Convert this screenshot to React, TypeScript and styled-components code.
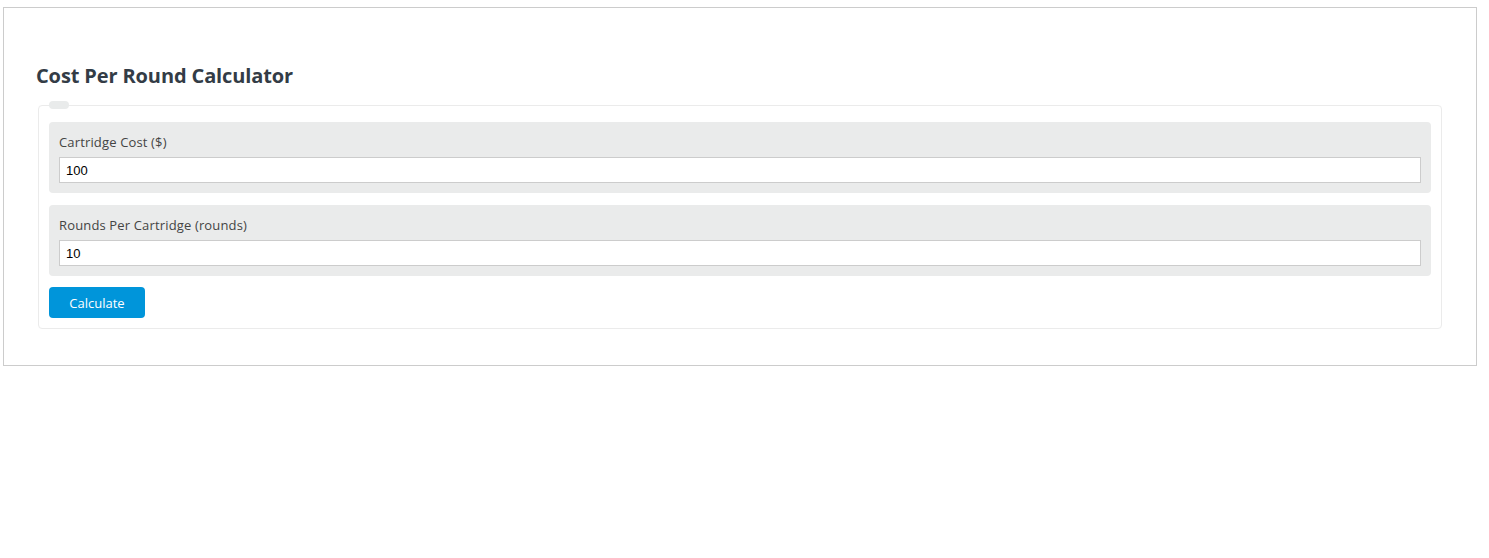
import React, { useState } from 'react';
import styled, { createGlobalStyle } from 'styled-components';

const GlobalStyle = createGlobalStyle`
  body {
    margin: 0;
    padding: 0;
    background: #fff;
    font-family: 'Open Sans', 'Noto Sans', Arial, sans-serif;
  }
`;

const Page = styled.div`
  padding: 7px 0 0 3px;
`;

const Box = styled.div`
  width: 1474px;
  height: 359px;
  box-sizing: border-box;
  border: 1px solid #cccccc;
  padding: 0 34px;
`;

const Title = styled.h2`
  margin: 0 0 0 -2px;
  padding-top: 56px;
  font-size: 20px;
  line-height: 24px;
  font-weight: 700;
  color: #333c46;
  letter-spacing: -0.12px;
`;

const Fieldset = styled.div`
  position: relative;
  margin-top: 17px;
  border: 1px solid #ebebeb;
  border-radius: 4px;
  padding: 16px 10px 10px;
  display: flex;
  flex-direction: column;
  gap: 12px;
`;

const Legend = styled.span`
  position: absolute;
  top: -5px;
  left: 10px;
  width: 20px;
  height: 8px;
  border-radius: 4px;
  background: #e9ebeb;
`;

const Row = styled.div`
  background: #eaebeb;
  border-radius: 4px;
  padding: 10px;
  display: flex;
  flex-direction: column;
  gap: 5px;
`;

const Label = styled.label`
  font-size: 13px;
  line-height: 20px;
  color: #444;
  letter-spacing: 0.15px;
`;

const Input = styled.input`
  height: 26px;
  box-sizing: border-box;
  border: 1px solid #cccccc;
  background: #fff;
  padding: 0 6px;
  font-family: 'Liberation Sans', Arial, sans-serif;
  font-size: 13px;
  color: #000;
  outline: none;
`;

const Button = styled.button`
  align-self: flex-start;
  margin-top: -1px;
  width: 96px;
  height: 31px;
  border: none;
  border-radius: 4px;
  background: #0095da;
  color: #fff;
  font-family: inherit;
  font-size: 13px;
  cursor: pointer;
`;

export default function App() {
  const [cost, setCost] = useState('100');
  const [rounds, setRounds] = useState('10');

  return (
    <>
      <GlobalStyle />
      <Page>
        <Box>
          <Title>Cost Per Round Calculator</Title>
          <Fieldset>
            <Legend />
            <Row>
              <Label>Cartridge Cost ($)</Label>
              <Input value={cost} onChange={e => setCost(e.target.value)} />
            </Row>
            <Row>
              <Label>Rounds Per Cartridge (rounds)</Label>
              <Input value={rounds} onChange={e => setRounds(e.target.value)} />
            </Row>
            <Button>Calculate</Button>
          </Fieldset>
        </Box>
      </Page>
    </>
  );
}
